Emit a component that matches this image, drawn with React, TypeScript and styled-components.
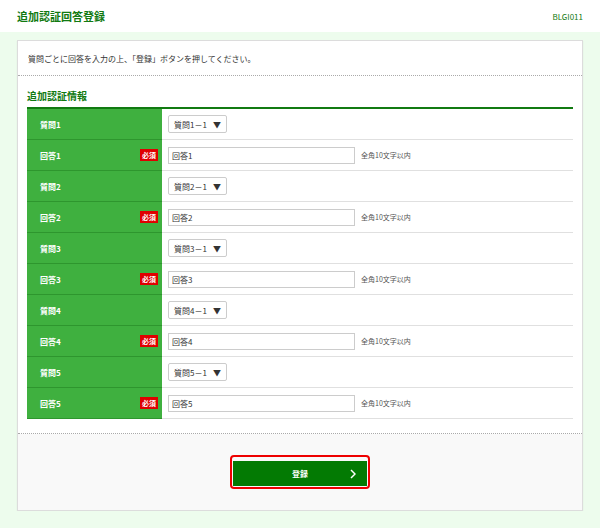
import React from 'react';
import styled, { createGlobalStyle } from 'styled-components';

const Global = createGlobalStyle`
  body { margin: 0; background: #edfced; font-family: "Noto Sans CJK JP", "Liberation Sans", sans-serif; }
`;

const Header = styled.div`
  height: 32px;
  background: #fff;
  display: flex;
  align-items: center;
  justify-content: space-between;
  padding: 0 17px;
`;

const PageTitle = styled.h1`
  margin: 0;
  font-size: 11px;
  font-weight: bold;
  color: #117a11;
`;

const ScreenId = styled.span`
  font-size: 8px;
  color: #117a11;
`;

const Card = styled.div`
  margin: 8px 17px 0;
  background: #fff;
  border: 1px solid #dcdcdc;
  box-shadow: 0 1px 1px rgba(0,0,0,0.1);
`;

const Lead = styled.p`
  margin: 0;
  padding: 12px 10px 11px;
  font-size: 8px;
  color: #333;
  border-bottom: 1px dotted #aaa;
`;

const Body = styled.div`
  padding: 12px 9px 14px;
  border-bottom: 1px dotted #aaa;
`;

const SectionTitle = styled.h2`
  margin: 0;
  font-size: 10px;
  font-weight: bold;
  color: #117a11;
  padding-bottom: 4px;
  border-bottom: 2px solid #117a11;
`;

const Row = styled.div`
  display: flex;
  height: 30px;
  border-bottom: 1px solid #e0e0e0;
`;

const Label = styled.div`
  width: 135px;
  box-sizing: border-box;
  background: #3fb03f;
  border-bottom: 1px solid #2e962e;
  margin-bottom: -1px;
  display: flex;
  align-items: center;
  justify-content: space-between;
  padding: 0 4px 0 13px;
  color: #fff;
  font-size: 8px;
  font-weight: bold;
`;

const Required = styled.span`
  background: #e00000;
  color: #fff;
  font-size: 7px;
  padding: 1px 2px;
`;

const Cell = styled.div`
  flex: 1;
  display: flex;
  align-items: center;
  padding-left: 6px;
  gap: 6px;
`;

const Select = styled.div`
  height: 16px;
  border: 1px solid #ccc;
  border-radius: 2px;
  display: flex;
  align-items: center;
  padding: 0 5px;
  gap: 6px;
  font-size: 8px;
  color: #333;
`;

const Input = styled.div`
  width: 182px;
  height: 15px;
  border: 1px solid #ccc;
  display: flex;
  align-items: center;
  padding-left: 3px;
  font-size: 8px;
  color: #333;
`;

const Note = styled.span`
  font-size: 7px;
  color: #555;
`;

const Footer = styled.div`
  background: #f9f9f9;
  height: 76px;
  display: flex;
  justify-content: center;
  align-items: center;
`;

const ButtonRing = styled.div`
  border: 2px solid #ee0000;
  border-radius: 4px;
  padding: 1px;
`;

const Button = styled.button`
  width: 134px;
  height: 25px;
  border: none;
  background: #037a03;
  color: #fff;
  font-size: 8px;
  font-family: inherit;
  font-weight: bold;
  position: relative;
  padding: 0;
`;

const Chevron = styled.svg`
  position: absolute;
  right: 11px;
  top: 8px;
`;

export default function App() {
  const qs = [1, 2, 3, 4, 5];
  return (
    <>
      <Global />
      <Header>
        <PageTitle>追加認証回答登録</PageTitle>
        <ScreenId>BLGI011</ScreenId>
      </Header>
      <Card>
        <Lead>質問ごとに回答を入力の上、「登録」ボタンを押してください。</Lead>
        <Body>
          <SectionTitle>追加認証情報</SectionTitle>
          {qs.map((n) => (
            <React.Fragment key={n}>
              <Row>
                <Label>質問{n}</Label>
                <Cell>
                  <Select>
                    <span>質問{n}－1</span>
                    <span>▼</span>
                  </Select>
                </Cell>
              </Row>
              <Row>
                <Label>
                  <span>回答{n}</span>
                  <Required>必須</Required>
                </Label>
                <Cell>
                  <Input>回答{n}</Input>
                  <Note>全角10文字以内</Note>
                </Cell>
              </Row>
            </React.Fragment>
          ))}
        </Body>
        <Footer>
          <ButtonRing>
            <Button>
              登録
              <Chevron width="6" height="10" viewBox="0 0 6 10">
                <path d="M1 1l4 4-4 4" stroke="#fff" strokeWidth="1.5" fill="none" />
              </Chevron>
            </Button>
          </ButtonRing>
        </Footer>
      </Card>
    </>
  );
}
